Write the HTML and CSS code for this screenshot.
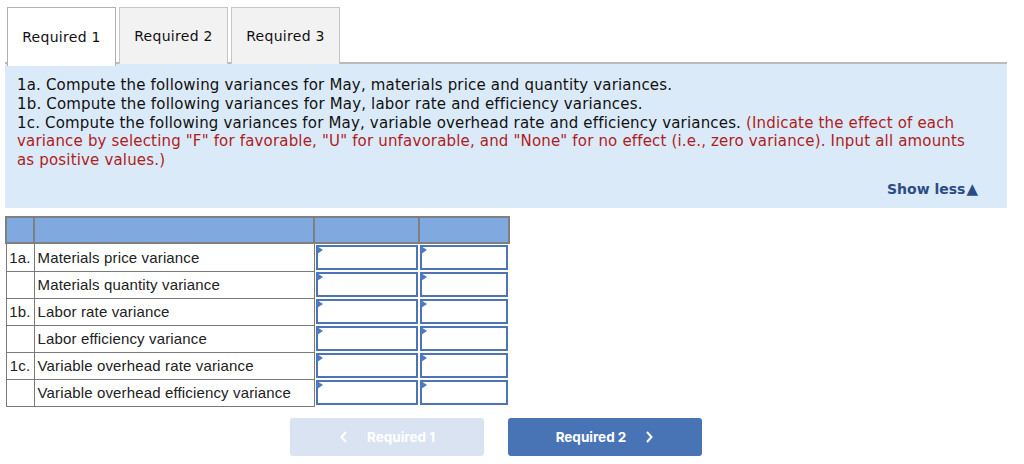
FILE: index.html
```html
<!DOCTYPE html>
<html>
<head>
<meta charset="utf-8">
<link rel="stylesheet" href="styles.css">
</head>
<body>
<div class="page">
  <div class="tabs">
    <div class="tab active">Required 1</div>
    <div class="tab">Required 2</div>
    <div class="tab">Required 3</div>
  </div>
  <div class="panel">
    <p class="q">1a. Compute the following variances for May, materials price and quantity variances.<br>1b. Compute the following variances for May, labor rate and efficiency variances.<br>1c. Compute the following variances for May, variable overhead rate and efficiency variances. <span class="red">(Indicate the effect of each variance by selecting "F" for favorable, "U" for unfavorable, and "None" for no effect (i.e., zero variance). Input all amounts as positive values.)</span></p>
    <div class="showless">Show less<span class="tri">&#9650;</span></div>
  </div>
  <table class="grid">
    <tr class="head"><td class="c1"></td><td class="c2"></td><td class="c3"></td><td class="c4"></td></tr>
    <tr><td class="c1">1a.</td><td class="c2">Materials price variance</td><td class="in"><div class="box"></div></td><td class="in"><div class="box"></div></td></tr>
    <tr><td class="c1"></td><td class="c2">Materials quantity variance</td><td class="in"><div class="box"></div></td><td class="in"><div class="box"></div></td></tr>
    <tr><td class="c1">1b.</td><td class="c2">Labor rate variance</td><td class="in"><div class="box"></div></td><td class="in"><div class="box"></div></td></tr>
    <tr><td class="c1"></td><td class="c2">Labor efficiency variance</td><td class="in"><div class="box"></div></td><td class="in"><div class="box"></div></td></tr>
    <tr><td class="c1">1c.</td><td class="c2">Variable overhead rate variance</td><td class="in"><div class="box"></div></td><td class="in"><div class="box"></div></td></tr>
    <tr><td class="c1"></td><td class="c2">Variable overhead efficiency variance</td><td class="in"><div class="box"></div></td><td class="in"><div class="box"></div></td></tr>
  </table>
  <div class="nav">
    <div class="btn prev"><svg width="10" height="14" viewBox="0 0 10 14"><path d="M7 2 L2.5 7 L7 12" fill="none" stroke="#fff" stroke-width="2"/></svg><span>Required 1</span></div>
    <div class="btn next"><span>Required 2</span><svg width="10" height="14" viewBox="0 0 10 14"><path d="M3 2 L7.5 7 L3 12" fill="none" stroke="#fff" stroke-width="2"/></svg></div>
  </div>
</div>
</body>
</html>
```
FILE: styles.css
```css
html, body { margin: 0; padding: 0; background: #fff; }
.page { padding: 7px 0 0 5px; width: 1002px; font-family: "DejaVu Sans", Verdana, sans-serif; }
.tabs { display: flex; gap: 3px; padding-left: 2px; height: 55px; border-bottom: 2px solid #bcbcbc; }
.tab { width: 107px; height: 55px; border: 1px solid #c6c6c6; border-bottom: none; background: #f2f2f2; font-size: 14px; letter-spacing: 0.3px; color: #111; display: flex; align-items: center; justify-content: center; box-sizing: content-box; padding-bottom: 1px; }
.tab.active { background: #fff; height: 57px; margin-bottom: -2px; position: relative; border-color: #b0b0b0; }
.panel { background: #dbeaf8; height: 144px; padding: 0 30px 0 12px; box-sizing: border-box; display: flex; flex-direction: column; }
.q { margin: 0; padding-top: 12px; font-size: 15px; line-height: 18.8px; color: #111; letter-spacing: 0.17px; }
.red { color: #b01c1c; }
.showless { align-self: flex-end; margin-top: 10px; margin-right: -1px; font-size: 14px; font-weight: bold; color: #2a4d86; display: flex; align-items: center; }
.tri { font-size: 15px; margin-left: 1px; }
.grid { margin-top: 8px; border-collapse: collapse; font-family: "Liberation Sans", Arial, sans-serif; font-size: 15px; letter-spacing: 0.15px; color: #222; }
.grid td { border: 2px solid #888; height: 27px; padding: 0; box-sizing: border-box; }
.grid tr:not(.head) td.c1, .grid tr:not(.head) td.c2 { border-width: 1px; border-color: #7a7a7a; }
.head td { background: #80aadf; height: 26px; border: 2px solid #7f7f7f; }
.c1 { width: 28px; text-align: center; }
.c2 { width: 280px; padding-left: 3px !important; }
.grid td.in { width: 105px; padding: 1px; border: none; height: 27px; }
.grid td.in + td.in { width: 90px; }
.box { height: 25px; border: 2px solid #4d74b4; box-sizing: border-box; position: relative; background: #fff; }
.box::before { content: ""; position: absolute; left: -1px; top: -1px; border-left: 6px solid #4a7bc6; border-top: 4px solid transparent; border-bottom: 4px solid transparent; }
.nav { display: flex; gap: 24px; margin-top: 11px; padding-left: 285px; }
.btn { width: 194px; height: 38px; border-radius: 3px; display: flex; align-items: center; justify-content: center; gap: 18px; color: #fff; font-family: "Inter", "Liberation Sans", sans-serif; font-weight: 700; font-size: 13.5px; }
.prev { background: #dae3f1; }
.next { background: #4874b6; }
```
